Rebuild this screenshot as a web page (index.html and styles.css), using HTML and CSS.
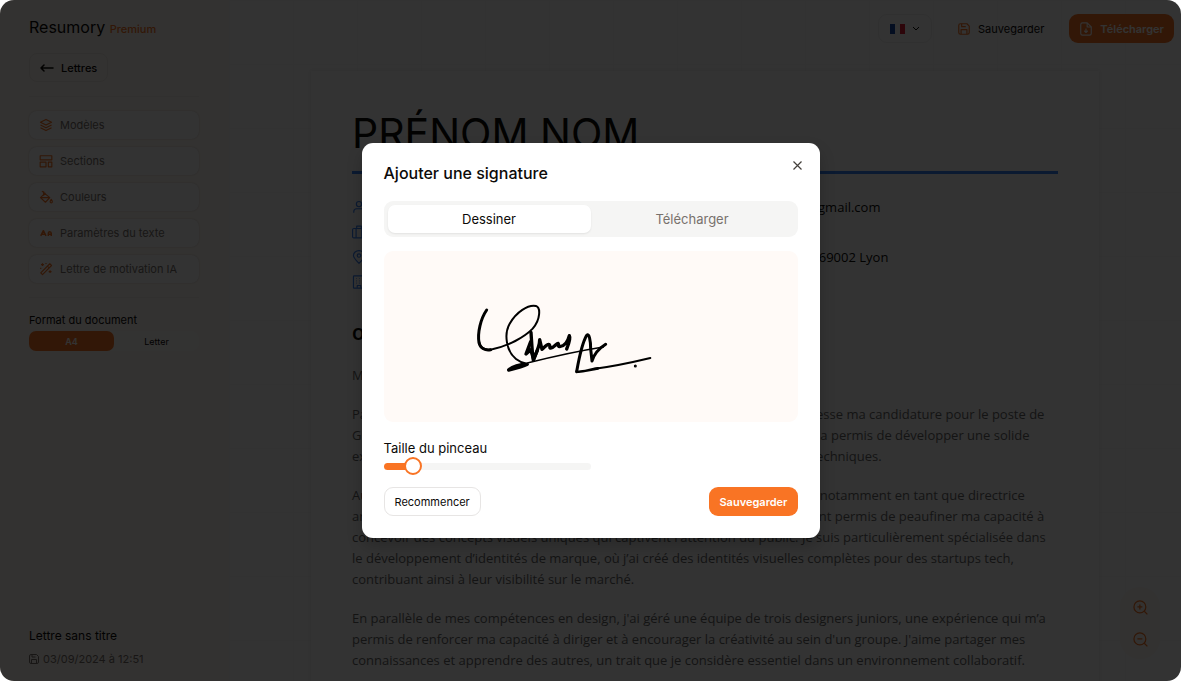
FILE: index.html
```
<!DOCTYPE html>
<html lang="fr">
<head>
  <meta charset="UTF-8">
  <meta name="viewport" content="width=device-width, initial-scale=1">
  <title>Resumory - Lettre sans titre</title>
  <link rel="stylesheet" href="styles.css">
</head>
<body>

<div class="app">
  <aside class="sidebar">
    <div class="brand">Resumory <span>Premium</span></div>
    <a href="#" class="back">
      <svg width="14" height="10" viewBox="0 0 14 10" fill="none" stroke="currentColor" stroke-width="1.5" stroke-linecap="round" stroke-linejoin="round"><path d="M13 5H1M4 2L1 5l3 3"/></svg>
      Lettres
    </a>
    <hr>
    <nav class="menu">
      <button type="button">
        <svg class="icon" viewBox="0 0 24 24"><path d="M12 2.500l9.500 4.700L12 12 2.500 7.200z"/><path d="M2.500 12l9.500 4.800 9.500-4.800M2.500 16.800l9.500 4.700 9.500-4.700"/></svg>
        Modèles
      </button>
      <button type="button">
        <svg class="icon" viewBox="0 0 24 24"><rect x="2" y="3" width="20" height="7"/><rect x="2" y="14" width="10" height="8"/><rect x="16" y="14" width="6" height="8"/></svg>
        Sections
      </button>
      <button type="button">
        <svg class="icon" viewBox="0 0 24 24"><path d="M5 2l13.500 11-7.500 8L2.500 13 11 5M2.500 13H18"/><path d="M8 2v8"/><path d="M21 16c-3 4-2 6 0 6s3-2 0-6z"/></svg>
        Couleurs
      </button>
      <button type="button">
        <svg class="icon" viewBox="0 0 24 24"><path stroke-width="2.600" d="M3 17l4.500-9 4.500 9M5 14h5"/><path stroke-width="2.600" d="M16 17v-4q0-3 2.500-3t2.500 3v4M16 14h5"/></svg>
        Paramètres du texte
      </button>
      <button type="button">
        <svg class="icon" viewBox="0 0 24 24"><path d="M3 18.500L18.500 3 21.500 6 6 21.500zM14.500 7l3 3"/><path d="M6 2v5M3.500 4.500h5M12 1.500v2M19 14v5M16.500 16.500h5M3 10v2"/></svg>
        Lettre de motivation IA
      </button>
    </nav>
    <hr>
    <div class="format-label">Format du document</div>
    <div class="format">
      <button type="button" class="active">A4</button>
      <button type="button">Letter</button>
    </div>
    <div class="doc-info">
      <div class="doc-name">Lettre sans titre</div>
      <div class="doc-date">
        <svg class="icon small" viewBox="2 2 20 20"><path d="M3 6q0-3 3-3h11l4 4v11q0 3-3 3H6q-3 0-3-3z"/><path d="M8 3v5h7M7 21v-8h10v8"/></svg>
        03/09/2024 à 12:51
      </div>
    </div>
  </aside>

  <main class="editor">
    <header class="topbar">
      <button type="button" class="lang" aria-label="Langue">
        <span class="flag"></span>
        <svg width="8" height="6" viewBox="0 0 8 6" fill="none" stroke="currentColor"><path d="M1 1l3 3 3-3"/></svg>
      </button>
      <button type="button" class="save">
        <svg class="icon" viewBox="0 0 24 24"><path d="M3 6q0-3 3-3h11l4 4v11q0 3-3 3H6q-3 0-3-3z"/><path d="M8 3v5h7M7 21v-8h10v8"/></svg>
        Sauvegarder
      </button>
      <button type="button" class="download">
        <svg class="icon" viewBox="0 0 24 24"><path d="M14 1.500H6q-3 0-3 3v15q0 3 3 3h12q3 0 3-3v-11z"/><path d="M14 1.500v7h7M12 11v7M9 15l3 3 3-3"/></svg>
        Télécharger
      </button>
    </header>

    <article class="paper">
      <h1>PRÉNOM NOM</h1>
      <div class="contact">
        <div><svg class="icon" viewBox="0 0 24 24"><circle cx="12" cy="7" r="4.500"/><path d="M3 22v-2q0-5 5-5h8q5 0 5 5v2"/></svg>Prénom Nom</div>
        <div><svg class="icon" viewBox="0 0 24 24"><path d="M3 4h18v6l-9 7-9-7zM3 10v11h18V10"/></svg>nom-prenom@gmail.com</div>
        <div><svg class="icon" viewBox="0 0 24 24"><rect x="1" y="6" width="22" height="16" rx="2"/><path d="M7 6v16M17 6v16M8 6V2h8v4"/></svg>Graphiste</div>
        <div></div>
        <div><svg class="icon" viewBox="0 0 24 24"><path d="M12 23C5 16 2.500 13 2.500 9.500a9.500 8.500 0 0 1 19 0C21.500 13 19 16 12 23z"/><circle cx="12" cy="9.500" r="3"/></svg>Lyon, France</div>
        <div><svg class="icon" viewBox="0 0 24 24"><path d="M3 11l9-8 9 8v11H3z"/></svg>1 rue Centrale, 69002 Lyon</div>
        <div><svg class="icon" viewBox="0 0 24 24"><rect x="2.500" y="1.500" width="19" height="21" rx="1"/><path d="M7 6h1M12 6h1M17 6h1M7 10h1M12 10h1M17 10h1M7 14h1M12 14h1M17 14h1M9 22v-4h6v4"/></svg>Agence Créative</div>
      </div>
      <h2>Objet : Candidature</h2>
      <p>Madame, Monsieur,</p>
      <p>
        Passionnée par le design graphique et la communication visuelle, je vous adresse ma candidature pour le poste de<br>
        Graphiste dans votre agence. Mon parcours en création et communication m'a permis de développer une solide<br>
        expertise en identité visuelle et une maîtrise globale des outils et méthodes techniques.
      </p>
      <p>
        Au cours de ma carrière, j'ai eu l'occasion de mener plusieurs grands projets, notamment en tant que directrice<br>
        artistique junior. Ces expériences riches et variées au sein de six agences m'ont permis de peaufiner ma capacité à<br>
        concevoir des concepts visuels uniques qui captivent l'attention du public. Je suis particulièrement spécialisée dans<br>
        le développement d’identités de marque, où j’ai créé des identités visuelles complètes pour des startups tech,<br>
        contribuant ainsi à leur visibilité sur le marché.
      </p>
      <p>
        En parallèle de mes compétences en design, j'ai géré une équipe de trois designers juniors, une expérience qui m’a<br>
        permis de renforcer ma capacité à diriger et à encourager la créativité au sein d'un groupe. J'aime partager mes<br>
        connaissances et apprendre des autres, un trait que je considère essentiel dans un environnement collaboratif.
      </p>
    </article>

    <div class="zoom">
      <button type="button" aria-label="Zoom avant"><svg class="icon" viewBox="0 0 24 24"><circle cx="11" cy="11" r="9.500"/><path d="M18 18l5 5M11 7v8M7 11h8"/></svg></button>
      <button type="button" aria-label="Zoom arrière"><svg class="icon" viewBox="0 0 24 24"><circle cx="11" cy="11" r="9.500"/><path d="M18 18l5 5M7 11h8"/></svg></button>
    </div>
  </main>

  <div class="overlay">
    <section class="modal" role="dialog" aria-modal="true" aria-labelledby="modalTitle">
      <button type="button" class="close" aria-label="Fermer">
        <svg width="9" height="9" viewBox="0 0 9 9" fill="none" stroke="currentColor" stroke-width="1.200"><path d="M.5.5l8 8M8.500.5l-8 8"/></svg>
      </button>
      <h2 id="modalTitle">Ajouter une signature</h2>
      <div class="tabs" role="tablist">
        <button type="button" role="tab" aria-selected="true" class="active">Dessiner</button>
        <button type="button" role="tab" aria-selected="false">Télécharger</button>
      </div>
      <svg class="pad" viewBox="0 0 1242 513" role="img" aria-label="Signature">
        <g fill="none" stroke="#000" stroke-linecap="round" stroke-linejoin="round" transform="translate(168 117)">
          <path stroke-width="9" d="M140 60C122 86 112 128 117 158C121 176 136 182 152 179"/>
          <path stroke-width="6" d="M117 152C119 176 137 182 157 178C205 167 252 143 278 116C302 89 302 52 288 48C264 43 229 66 209 101C191 132 199 184 228 207C238 215 248 219 260 221"/>
          <path stroke-width="10" d="M206 240C218 228 239 223 262 223C249 230 228 235 206 240"/>
          <path stroke-width="10" d="M273 127C275 154 276 185 280 211C284 197 299 172 299 149L306 178C316 169 324 161 328 164C332 168 327 175 332 174C342 173 350 159 354 160C358 162 352 170 359 170C371 169 383 157 388 137C393 145 385 165 380 177"/>
          <path stroke-width="10" d="M272 155L258 192L272 179L281 208L292 181"/>
          <path stroke-width="4" d="M262 219C330 202 408 184 490 171"/>
          <path stroke-width="9" d="M410 245C416 211 424 164 440 136C447 127 452 151 452 177L456 213C463 191 476 176 497 163"/>
          <path stroke-width="8" d="M410 244C419 249 443 240 474 235"/>
          <path stroke-width="6" d="M460 237C515 230 577 217 631 204"/>
          <circle cx="586" cy="228" r="2" stroke-width="5"/>
        </g>
      </svg>
      <label for="brush">Taille du pinceau</label>
      <input type="range" id="brush" min="0" max="100" value="11">
      <div class="actions">
        <button type="button" class="reset">Recommencer</button>
        <button type="button" class="submit">Sauvegarder</button>
      </div>
    </section>
  </div>
</div>

</body>
</html>
```
FILE: styles.css
```
* {
  box-sizing: border-box;
}
body {
  margin: 0;
  background: #fff;
  color: #0c0a09;
  font-family: Inter, sans-serif;
  font-size: 11px;
}
button {
  display: flex;
  align-items: center;
  justify-content: center;
  padding: 0;
  border: 0;
  background: none;
  color: inherit;
  font: inherit;
  cursor: pointer;
}
.icon {
  width: 14px;
  height: 14px;
  flex: none;
  fill: none;
  stroke: currentColor;
  stroke-width: 2;
  stroke-linejoin: round;
}
.app {
  position: relative;
  display: flex;
  height: 100vh;
  overflow: hidden;
  border-radius: 14px;
}

/* sidebar */
.sidebar {
  display: flex;
  flex-direction: column;
  width: 229px;
  flex: none;
  padding: 17px 30px 15px 29px;
  background: #fff9f3;
}
.sidebar hr {
  width: 100%;
  margin: 14px 0;
  border: 0;
  border-top: 1px solid #f3ede8;
}
.brand {
  font-size: 16px;
  line-height: 20px;
}
.brand span {
  color: #f97424;
  font-size: 11px;
  font-weight: 500;
}
.back {
  display: flex;
  align-items: center;
  align-self: flex-start;
  gap: 7px;
  height: 29px;
  margin-top: 14px;
  padding: 0 10px;
  border: 1px solid #f0ebe6;
  border-radius: 8px;
  color: #0c0a09;
  font-weight: 500;
  text-decoration: none;
}
.menu {
  display: grid;
  gap: 8px;
}
.menu button {
  justify-content: flex-start;
  gap: 7px;
  height: 28px;
  padding: 0 10px;
  border-radius: 8px;
  background: #fff;
  box-shadow: 0 0 2px rgba(0, 0, 0, 0.2);
  color: #78716c;
}
.menu .icon {
  color: #f97424;
}
.format-label {
  line-height: 16px;
}
.format {
  display: grid;
  grid-template-columns: 1fr 1fr;
  margin-top: 3px;
  border-radius: 7px;
  background: #fffcf9;
  font-size: 9px;
}
.format button {
  height: 20px;
}
.format .active {
  border-radius: 7px;
  background: #f97424;
  color: #fff;
  font-weight: 600;
}
.doc-info {
  margin-top: auto;
}
.doc-name {
  font-size: 12px;
  line-height: 16px;
}
.doc-date {
  display: flex;
  align-items: center;
  gap: 4px;
  margin-top: 8px;
  color: #78716c;
  line-height: 14px;
}
.icon.small {
  width: 10px;
  height: 10px;
}

/* editor */
.editor {
  position: relative;
  flex: 1;
  min-width: 0;
  background-color: #fdfdfd;
  background-image: linear-gradient(#f8f8f8 1px, transparent 1px), linear-gradient(90deg, #f8f8f8 1px, transparent 1px);
  background-size: 64px 64px;
}
.topbar {
  display: flex;
  justify-content: flex-end;
  gap: 14px;
  padding: 14px 7px 28px;
}
.topbar button {
  height: 29px;
  padding: 0 11px;
  border-radius: 9px;
}
.topbar .lang {
  gap: 7px;
  border: 1px solid #f0f0f0;
  background: #fff;
}
.flag {
  width: 15px;
  height: 10px;
  background: linear-gradient(90deg, #1645a4 33%, #fff 33%, #fff 67%, #e01c34 67%);
}
.topbar .save {
  gap: 7px;
}
.save .icon {
  color: #f97424;
}
.topbar .download {
  gap: 7px;
  padding: 0 10px;
  background: #f97424;
  color: #fff;
  font-weight: 600;
}
.paper {
  margin: 0 82px;
  padding: 37px 41px;
  background: #fff;
  box-shadow: 0 0 4px rgba(0, 0, 0, 0.1);
  font-family: "Open Sans", sans-serif;
  font-size: 13px;
}
.paper h1 {
  margin: 0;
  padding-bottom: 13px;
  border-bottom: 3px solid #3b82f6;
  font-family: Inter, sans-serif;
  font-size: 41px;
  font-weight: 400;
  line-height: 50px;
}
.contact {
  display: grid;
  grid-template-columns: 1fr 1fr;
  grid-auto-rows: 18px;
  gap: 7px 0;
  margin-top: 24px;
}
.contact div {
  display: flex;
  align-items: center;
  gap: 7px;
}
.contact .icon {
  color: #3b82f6;
}
.paper h2 {
  margin: 33px 0 21px;
  font-size: 16px;
  line-height: 20px;
}
.paper p {
  margin: 0 0 18px;
  color: #666;
  line-height: 21px;
  white-space: nowrap;
}
.zoom {
  position: absolute;
  right: 21px;
  bottom: 22px;
  display: grid;
  gap: 16px;
  padding: 12px;
  border-radius: 20px;
  background: #fff9f3;
  color: #f97424;
}
.zoom button {
  width: 16px;
  height: 16px;
}
.zoom .icon {
  width: 15px;
  height: 15px;
}

/* signature dialog */
.overlay {
  position: absolute;
  inset: 0;
  display: flex;
  align-items: center;
  justify-content: center;
  background: rgba(0, 0, 0, 0.8);
}
.modal {
  position: relative;
  display: flex;
  flex-direction: column;
  width: 458px;
  max-width: 100%;
  padding: 22px;
  border-radius: 11px;
  background: #fff;
  box-shadow: 0 8px 16px rgba(0, 0, 0, 0.2);
}
.close {
  position: absolute;
  top: 14px;
  right: 14px;
  width: 16px;
  height: 16px;
  color: #44403c;
}
.modal h2 {
  margin: 0;
  font-size: 16px;
  font-weight: 500;
  line-height: 16px;
}
.tabs {
  display: grid;
  grid-template-columns: 1fr 1fr;
  margin-top: 20px;
  padding: 4px;
  border-radius: 9px;
  background: #f5f5f4;
  color: #78716c;
  font-size: 13px;
}
.tabs button {
  height: 28px;
  border-radius: 7px;
}
.tabs .active {
  background: #fff;
  box-shadow: 0 1px 2px rgba(0, 0, 0, 0.08);
  color: #0c0a09;
}
.pad {
  width: 100%;
  margin-top: 14px;
  border-radius: 9px;
  background: #fffaf7;
}
.modal label {
  margin-top: 18px;
  font-size: 13px;
  line-height: 16px;
}
input[type="range"] {
  appearance: none;
  width: 50%;
  height: 18px;
  margin: 1px 0 0;
  background: none;
}
input[type="range"]::-webkit-slider-runnable-track {
  height: 7px;
  border-radius: 4px;
  background: linear-gradient(90deg, #f97424 14%, #f5f5f4 14%);
}
input[type="range"]::-webkit-slider-thumb {
  appearance: none;
  width: 18px;
  height: 18px;
  margin-top: -6px;
  border: 2px solid #f97424;
  border-radius: 50%;
  background: #fff;
}
.actions {
  display: flex;
  justify-content: space-between;
  margin-top: 12px;
}
.actions button {
  height: 29px;
  padding: 0 10px;
  border-radius: 9px;
}
.actions .reset {
  border: 1px solid #e7e5e4;
}
.actions .submit {
  background: #f97424;
  color: #fff;
  font-weight: 600;
}
```
